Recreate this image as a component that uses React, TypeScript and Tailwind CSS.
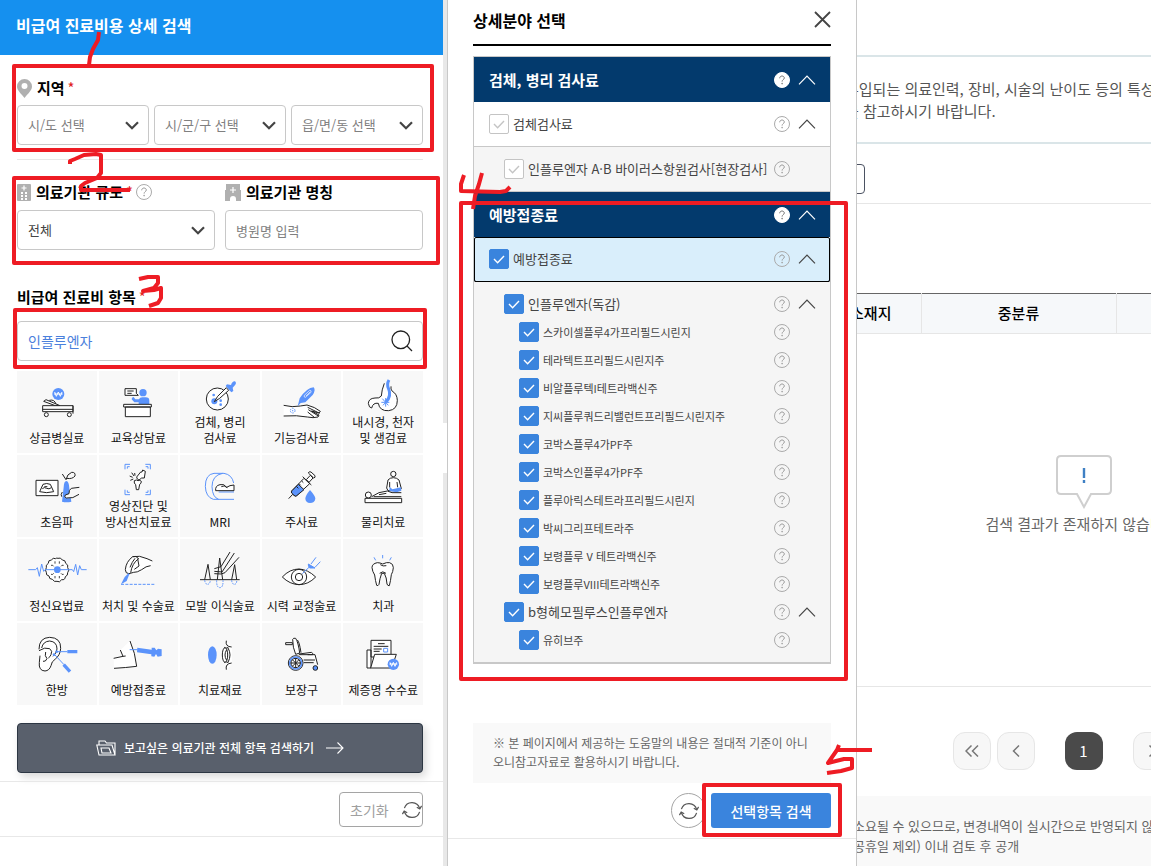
import React, { useState } from "react";

const BLUE = "#5b93fb";
const INK = "#222222";

function Help({ solid = false }: { solid?: boolean }) {
  return (
    <svg viewBox="0 0 16 16" className="size-4 shrink-0" fill="none">
      <circle cx="8" cy="8" r="7.5" fill={solid ? "#fff" : "none"} stroke={solid ? "#fff" : "#aaaaaa"} />
      <path d="M5.700 6.300c0-1.400 1-2.300 2.300-2.300s2.300.8 2.300 2c0 1.600-2.200 1.700-2.200 3.600" stroke={solid ? "#777" : "#999"} strokeWidth="1" />
      <circle cx="8.100" cy="11.600" r=".8" fill={solid ? "#777" : "#999"} />
    </svg>
  );
}

function ChevronUp({ color = "#444" }: { color?: string }) {
  return (
    <svg viewBox="0 0 18 10" className="h-[10px] w-[18px] shrink-0" fill="none">
      <path d="M1 9.300 9 1.200l8 8.100" stroke={color} strokeWidth="1.200" />
    </svg>
  );
}

function Refresh() {
  return (
    <svg viewBox="0 0 20 20" className="size-5 shrink-0" fill="none" stroke="#555" strokeWidth="1.200">
      <path d="M2.400 8.200A7.900 7.900 0 0 1 17.600 8.500M17.600 11.800A7.900 7.900 0 0 1 2.400 11.500" />
      <path d="M14.800 7.200l3 1.700 1.800-3M5.200 12.800l-3-1.700-1.800 3" />
    </svg>
  );
}

function Drop({ label, first, tone }: { label: string; first: string; tone: string }) {
  return (
    <div className="grid min-w-0 flex-1 items-center">
      <select
        aria-label={label}
        className={`col-start-1 row-start-1 h-10 w-full appearance-none rounded border border-[#c8c8c8] bg-white pl-[10px] pr-8 text-[13px] ${tone}`}
      >
        <option>{first}</option>
      </select>
      <svg viewBox="0 0 14 9" className="pointer-events-none col-start-1 row-start-1 mr-[10px] h-[9px] w-[14px] justify-self-end" fill="none">
        <path d="M1 1.200l6 6 6-6" stroke="#444" strokeWidth="2.200" />
      </svg>
    </div>
  );
}

type Tile = { label: string[]; box: string; art: React.ReactNode };

const tiles: Tile[] = [
  {
    label: ["상급병실료"],
    box: "80 45 180 108",
    art: (
      <>
        <circle cx="174" cy="72" r="18" fill={BLUE} stroke="none" />
        <path d="M163 66l5 13 6-13 6 13 5-13M161 72h26" stroke="#fff" />
        <path d="M147 91q16-4 20 12" />
        <path d="M130 94l7-5 42 18h-14z" fill="#fff" />
        <path d="M127 107h91v18h-91zM127 118h91M218 107v24" fill="#fff" />
        <circle cx="138" cy="134" r="6" fill="#fff" />
        <circle cx="207" cy="134" r="6" fill="#fff" />
      </>
    ),
  },
  {
    label: ["교육상담료"],
    box: "325 45 180 108",
    art: (
      <>
        <path d="M376 56h34v14l6 6h-40zM383 63h19M383 70h13" fill="#fff" />
        <circle cx="430" cy="68" r="11" fill={BLUE} stroke="none" />
        <path d="M449 103V92q0-10-11-10h-10q-8 0-10 6l-11 0-5-7q-7 1-6 7l8 9h13v6z" fill={BLUE} stroke="none" />
        <path d="M372 103h83v8h-83zM377 111h75v29h-75z" fill="#fff" />
      </>
    ),
  },
  {
    label: ["검체, 병리", "검사료"],
    box: "570 24 180 108",
    art: (
      <>
        <circle cx="652" cy="87" r="33" fill="#fff" />
        <g fill={BLUE} stroke="none">
          <circle cx="643" cy="94" r="9" />
          <circle cx="641" cy="75" r="4" />
          <circle cx="662" cy="92" r="4" />
          <circle cx="662" cy="104" r="4" />
        </g>
        <path d="M643 95l10-16 26-26 7 8-27 24z" fill="#fff" />
        <path d="M681 43l12 2q4-12 12-11 7 6-3 15l-4 4 2 10-6 4-17-19z" fill={BLUE} stroke="none" />
      </>
    ),
  },
  {
    label: ["기능검사료"],
    box: "155 45 180 108",
    art: (
      <>
        <path d="M190 106q26 7 50 2l20-3q24 6 40 19l-4 5-22-6 22 12-3 6q-14 4-32 0-30-6-71-3" fill="#fff" />
        <path d="M262 112l36 18M264 119l30 19M262 126l20 16" />
        <path d="M232 109l6-24q22-32 42-33 7 8-3 23l-22 22-14 2z" fill={BLUE} stroke="none" />
        <path d="M252 76l16-15q6 0 4 6l-17 15q-5 0-3-6zM257 78l12-12" stroke="#fff" strokeWidth="2" />
        <circle cx="217" cy="122" r="7" stroke={BLUE} strokeDasharray="4 3" />
        <circle cx="217" cy="122" r="2" fill={BLUE} stroke="none" />
      </>
    ),
  },
  {
    label: ["내시경, 천자", "및 생검료"],
    box: "400 24 180 108",
    art: (
      <>
        <path
          d="M494 40q-8 20-9 38-6 8-19 6-19 1-20 16 2 14 10 14 4-17 20-14 4 24 31 22 26-3 26-31-1-20-15-27-6-6-4-15z"
          fill="#fff"
          stroke="none"
        />
        <path d="M494 40q-8 20-9 38-6 8-19 6-19 1-20 16 2 14 10 14 4-17 20-14 4 24 31 22 26-3 26-31-1-20-15-27-6-6-4-15" />
        <path d="M508 30q-8 13-1 27 9 21-8 39" stroke={BLUE} strokeWidth="9" />
        <path d="M488 86l18 20M506 88l-16 18M485 97h24M498 84v26" stroke={BLUE} />
      </>
    ),
  },
  {
    label: ["초음파"],
    box: "80 297 180 108",
    art: (
      <>
        <path d="M107 331h66v46h-66z" fill="#fff" />
        <path d="M128 343q11-5 22 0l10 22q-21 6-42 0zM126 356q6-6 13-1 7 4 14-2M132 350h9" />
        <path d="M190 352q1-19 8-19 8 1 9 22l6 40q-14 3-28 0z" fill={BLUE} stroke="none" />
        <path d="M186 312l11 17M197 329q3-17 17-22 12-1 10 11-8 10-25 7" />
        <path d="M237 352l-24 3q-8 5-7 16l-11 4q-5 6 3 9 20 3 38-11" fill="#f8f8f8" />
        <path d="M186 366q-6 8-2 14" />
      </>
    ),
  },
  {
    label: ["영상진단 및", "방사선치료료"],
    box: "325 276 180 108",
    art: (
      <>
        <path d="M376 298v-15h15M437 283h15v15M452 359v15h-15M391 374h-15v-15M383 296v-6h7M438 290h7v6M445 361v6h-7M390 367h-7v-6" stroke={BLUE} />
        <path d="M411 321l12-15 4 0 2-6 8 4-3 20-8 0-8 6q-7-2-7-9zM404 332q7-4 11 0 6-3 10 2 0 7-5 9l-3 16h-7l-2-15q-6-4-4-12z" fill="#fff" />
        <path d="M390 318l9 4M396 308l7 10M392 331l9-4M405 309l1 8" />
      </>
    ),
  },
  {
    label: ["MRI"],
    box: "570 297 180 108",
    art: (
      <>
        <path d="M642 310q-26 3-26 39 1 32 24 39h62M642 310h30q24 4 29 29M668 310q-32 6-32 40 1 32 20 38M656 366h46" stroke={BLUE} />
        <path d="M702 345l-12 2-10 5q-8-12-20-8-15 3-13 18h55z" fill="#fff" />
        <path d="M664 350q8-6 18 3" />
      </>
    ),
  },
  {
    label: ["주사료"],
    box: "155 297 180 108",
    art: (
      <>
        <path d="M205 386l12-13" />
        <path d="M215 362l36-37 17 16-39 36q-4 3-8-1l-7-7q-2-3 1-7z" fill="#fff" />
        <path d="M215 362l19-19 17 16-22 18q-4 3-8-1l-7-7q-2-3 1-7z" fill={BLUE} />
        <path d="M247 320l26 25M258 329l12-13 8 8-12 13zM264 309q2-6 8-3l12 11q2 6-4 7zM228 349l6 6M236 341l5 5M244 333l5 5" fill="#fff" />
        <path d="M269 360q16 18 16 26-2 13-16 13-13-1-14-13 0-9 14-26z" fill={BLUE} stroke="none" />
      </>
    ),
  },
  {
    label: ["물리치료"],
    box: "400 297 180 108",
    art: (
      <>
        <circle cx="521" cy="312" r="8" fill="#fff" />
        <path d="M501 354l4-24q6-7 16-7t17 7l7 26-10 6h-30z" fill="#fff" />
        <path d="M510 350l8 8 26-6 1 10-14 5-22-4z" fill={BLUE} stroke="none" />
        <path d="M510 336v16M532 336l2 16" />
        <circle cx="446" cy="375" r="9" fill="#fff" />
        <path d="M456 380l22-12 25-5 14 5h28M462 380h83M478 374l22-4M436 385h110v13h-110z" fill="#fff" />
      </>
    ),
  },
  {
    label: ["정신요법료"],
    box: "80 45 180 108",
    art: (
      <>
        <path d="M166 62q-8-4-13 4-10 0-9 10-9 5-6 13-5 8 0 14-2 9 8 11 0 10 10 10 6 9 14 6 8 5 14-5 10 2 11-9 8-3 7-12 7-8 0-15 3-9-6-13 0-10-10-10-5-9-13-5-4-2-7 1z" fill="#fff" />
        <path d="M164 70v7M177 70v7M152 82q6-2 8 3M190 82q-6-2-8 3M152 109q6 2 8-3M190 109q-6 2-8-3M164 114v7M177 114v7" strokeWidth="2.500" />
        <path d="M84 95h22l5-6 6 26 7-37 6 22 4-5h82l4 6 6-22 6 32 6-28 5 12h16" stroke={BLUE} />
        <circle cx="171" cy="95" r="10" fill={BLUE} stroke="none" />
      </>
    ),
  },
  {
    label: ["처치 및 수술료"],
    box: "325 45 180 108",
    art: (
      <>
        <path d="M404 56q20-3 38 6l16 7-6 25q-14 1-26 6-14 8-24 6l-14-3q-10 3-11-7 2-24 26-40 9-3 14 6" fill="#fff" stroke="none" />
        <path d="M399 56q20-5 43 6l16 7M453 83q-14 1-27 12-14 9-24 8l-14 4q-11 0-11-12 2-24 22-39 10-4 18 6-20 14-24 42" />
        <path d="M414 62l4 22-14 10M391 88q6-16 15-27" />
        <path d="M387 105l-12 12-11 22 17-10 8-20z" fill={BLUE} stroke="none" />
        <path d="M364 139h104" stroke={BLUE} strokeDasharray="9 4" />
      </>
    ),
  },
  {
    label: ["모발 이식술료"],
    box: "570 45 180 108",
    art: (
      <>
        <path d="M600 125h119" />
        <path d="M614 125l10-46 7 46M652 125l7-65 9 65M695 125l9-45 6 45" />
        <path d="M643 92l20-6 27-44M643 100l23 2 37-57M643 107l20 1 12-4 42-46" fill="none" />
        <path d="M614 127q2 12 9 12 7-1 8-12M650 127q-1 22 10 22 10-1 9-22M695 127q1 12 9 12 7-2 6-12" stroke={BLUE} strokeDasharray="5 3" />
      </>
    ),
  },
  {
    label: ["시력 교정술료"],
    box: "155 45 180 108",
    art: (
      <>
        <path d="M186 117q22-24 50-24 26 1 50 24-22 23-50 23-28-1-50-23z" fill="#fff" />
        <circle cx="236" cy="117" r="23" />
        <circle cx="236" cy="117" r="11" />
        <path d="M246 107l20-19M272 78l15-20M284 88l16-17" stroke={BLUE} />
        <path d="M264 78l20 12-16 0q-5-4-4-12z" fill={BLUE} stroke={BLUE} />
      </>
    ),
  },
  {
    label: ["치과"],
    box: "400 45 180 108",
    art: (
      <>
        <path d="M473 74q8 0 16 4 12-6 21-4 11 3 11 15-1 13-6 21-2 18-6 33-5 1-7-5-1-20-8-32h-8q-6 16-8 33-3 6-7 3-4-14-6-31-7-11-8-22 0-12 16-15z" fill="#fff" />
        <path d="M482 80q8 6 18 3M480 106q9-9 19 0" />
        <path d="M463 58l5 9M489 51v10M515 58l-5 9" stroke={BLUE} />
      </>
    ),
  },
  {
    label: ["한방"],
    box: "80 297 180 108",
    art: (
      <>
        <path d="M116 334q0-35 32-36 34 1 33 33-1 20-16 32-12 8-13 20-5 15-18 16-20-1-17-26l2-20" fill="#fff" />
        <path d="M124 330q4-20 24-21 22 2 22 24-2 14-12 22M116 338q18-12 32-6 10 7 4 18-2 6-8 10M136 342q-4 12 4 20-4 10-12 8" />
        <path d="M169 341h32M163 350l28 30" stroke={BLUE} />
        <path d="M201 341h30M190 380l19 21" stroke={BLUE} strokeWidth="10" />
        <circle cx="169" cy="341" r="4" fill={BLUE} stroke="none" />
        <circle cx="161" cy="350" r="4" fill={BLUE} stroke="none" />
      </>
    ),
  },
  {
    label: ["예방접종료"],
    box: "325 297 180 108",
    art: (
      <>
        <path d="M391 309q14 31 20 76-32 4-68 6l-1-30 28-6-8-19z" fill="#fff" stroke="none" />
        <path d="M391 309q16 36 20 76-32 4-68 6M362 336l8 19-28 6M370 355l8-1" />
        <path d="M390 335h24M460 343h18" stroke={BLUE} />
        <path d="M413 329l43 6 0-6 9 0 5 8 5-5 11 2v20l-12 2-5-8-5 8-9-1v-6l-43-6z" fill={BLUE} stroke="none" />
      </>
    ),
  },
  {
    label: ["치료재료"],
    box: "570 297 180 108",
    art: (
      <>
        <ellipse cx="637" cy="351" rx="13" ry="26" fill={BLUE} stroke="none" />
        <path d="M679 308q-3 14 7 19 10 24 0 46-10 8-6 22l16-18V326z" fill="#fff" stroke="none" />
        <path d="M679 308q-4 18 16 19M679 395q-4-18 16-20M685 328q-9 6-12 0M685 374q-9-6-12 0" />
        <ellipse cx="675" cy="351" rx="8" ry="22" fill="#fff" />
        <path d="M684 330q12 20 0 43M680 335q-10 16 0 32" />
      </>
    ),
  },
  {
    label: ["보장구"],
    box: "155 297 180 108",
    art: (
      <>
        <path d="M196 314h20v6h-20zM217 304q2-5 9-3 8 12 12 44l-12 4q-9-20-9-45zM231 306q6 4 11 38M236 348l38-5q4 2 3 7h-40zM262 350h22l8 30M250 366h34M250 374h30" fill="#fff" />
        <circle cx="226" cy="375" r="22" fill="#fff" stroke={INK} strokeWidth="3" />
        <circle cx="226" cy="375" r="18" stroke={BLUE} strokeWidth="5" />
        <path d="M226 360v30M211 375h30M216 365l20 20M236 365l-20 20" />
        <circle cx="226" cy="375" r="14" />
        <circle cx="285" cy="390" r="7" fill={BLUE} />
      </>
    ),
  },
  {
    label: ["제증명 수수료"],
    box: "400 297 180 108",
    art: (
      <>
        <path d="M442 390v-54h12v54zM454 307h60v50h-60z" fill="#fff" />
        <path d="M475 317h20M462 325h44M462 333h24M462 340h18" />
        <path d="M492 331h12v11h-12z" stroke={BLUE} />
        <path d="M465 349h65l-14 41h-63z" fill="#fff" />
        <circle cx="521" cy="379" r="17" fill={BLUE} stroke="none" />
        <path d="M511 373l5 12 5-12 5 12 5-12M509 378h24" stroke="#fff" />
      </>
    ),
  },
];

function Box({ on, id, onToggle }: { on: boolean; id: string; onToggle: () => void }) {
  return (
    <span className="grid size-5 shrink-0 place-items-center">
      <input
        id={id}
        type="checkbox"
        checked={on}
        onChange={onToggle}
        className="col-start-1 row-start-1 size-5 appearance-none rounded-[2px] border border-[#c4c4c4] bg-white checked:border-[#3a84dd] checked:bg-[#3a84dd]"
      />
      <svg viewBox="0 0 12 9" className="pointer-events-none col-start-1 row-start-1 h-[9px] w-3" fill="none">
        <path d="M1 4l3.600 3.800L11 1" stroke={on ? "#fff" : "#c4c4c4"} strokeWidth="1.400" />
      </svg>
    </span>
  );
}

function Row({ id, text, initial = true, arrow = false, className }: { id: string; text: string; initial?: boolean; arrow?: boolean; className: string }) {
  const [on, setOn] = useState(initial);
  return (
    <div className={`flex items-center pr-[14px] ${className}`}>
      <Box id={id} on={on} onToggle={() => setOn(!on)} />
      <label htmlFor={id} className="ml-1 flex-1 whitespace-nowrap">
        {text}
      </label>
      <button type="button" aria-label="도움말" className="mr-2">
        <Help />
      </button>
      <button type="button" aria-label="접기" className={arrow ? "w-[18px]" : "invisible w-[18px]"}>
        <ChevronUp />
      </button>
    </div>
  );
}

function GroupHead({ text }: { text: string }) {
  return (
    <div className="flex h-[45px] items-center bg-[#033a6d] pl-[15px] pr-[14px] text-[15px] font-bold text-white">
      <h3 className="flex-1 pt-[2px]">{text}</h3>
      <button type="button" aria-label="도움말" className="mr-2">
        <Help solid />
      </button>
      <button type="button" aria-label="접기">
        <ChevronUp color="#fff" />
      </button>
    </div>
  );
}

const vaccines = [
  "스카이셀플루4가프리필드시린지",
  "테라텍트프리필드시린지주",
  "비알플루텍I테트라백신주",
  "지씨플루쿼드리밸런트프리필드시린지주",
  "코박스플루4가PF주",
  "코박스인플루4가PF주",
  "플루아릭스테트라프리필드시린지",
  "박씨그리프테트라주",
  "보령플루 V 테트라백신주",
  "보령플루VIII테트라백신주",
];

const Star = () => <span className="ml-[3px] font-normal text-[#e02020]">*</span>;

function SearchPanel() {
  return (
    <section className="w-[443px] shrink-0 bg-white">
      <header className="flex h-[55px] items-center bg-[#1590ef] px-4 pb-[6px]">
        <h1 className="text-base font-bold text-white">비급여 진료비용 상세 검색</h1>
      </header>
      <form className="px-[17px] pr-5" onSubmit={(e) => e.preventDefault()}>
        <div className="border-b border-[#e8e8e8] pb-[14px] pt-[22px]">
          <h2 className="flex h-[22px] items-center text-[15px] font-bold">
            <svg viewBox="0 0 15 19" className="mr-[5px] h-[19px] w-[15px]">
              <path fillRule="evenodd" fill="#b0b0b0" d="M7.500 0A7.500 7.500 0 0 1 15 7.500c0 4-4.500 7.500-7.500 11.500C4.500 15 0 11.500 0 7.500A7.500 7.500 0 0 1 7.500 0zm0 4a3 3 0 1 0 0 6 3 3 0 0 0 0-6z" />
            </svg>
            지역
            <Star />
          </h2>
          <div className="mt-[6px] flex gap-[5px]">
            <Drop label="시/도" first="시/도 선택" tone="text-[#808080]" />
            <Drop label="시/군/구" first="시/군/구 선택" tone="text-[#808080]" />
            <Drop label="읍/면/동" first="읍/면/동 선택" tone="text-[#808080]" />
          </div>
        </div>
        <div className="mt-[21px] flex gap-[10px]">
          <div className="flex-1">
            <h2 className="flex h-[22px] items-center text-[15px] font-bold">
              <svg viewBox="0 0 14 17" className="mr-[5px] h-[17px] w-[14px]">
                <rect width="14" height="17" rx="1" fill="#b0b0b0" />
                <path stroke="#fff" strokeWidth="1.200" d="M7 1.500v5M4.500 4h5" />
                <path fill="#fff" d="M4 8h2v2H4zM8 8h2v2H8zM4 11h2v2H4zM8 11h2v2H8zM4 14h2v2H4zM8 14h2v2H8z" />
              </svg>
              의료기관 규모
              <Star />
              <button type="button" aria-label="도움말" className="ml-[3px]">
                <Help />
              </button>
            </h2>
            <div className="mt-[7px] flex">
              <Drop label="의료기관 규모" first="전체" tone="text-[#444]" />
            </div>
          </div>
          <div className="flex-1">
            <label htmlFor="clinic" className="flex h-[22px] items-center text-[15px] font-bold">
              <svg viewBox="0 0 16 17" className="mr-[5px] h-[17px] w-4">
                <path fill="#b0b0b0" d="M1 0h14v6h1v11h-5v-2a3 3 0 0 0-6 0v2H0V6h1z" />
                <path stroke="#fff" strokeWidth="1.200" d="M8 3v6M5 6h6" />
              </svg>
              의료기관 명칭
            </label>
            <input
              id="clinic"
              placeholder="병원명 입력"
              className="mt-[7px] h-10 w-full rounded border border-[#c8c8c8] px-[10px] text-[13px] placeholder:text-[#808080]"
            />
          </div>
        </div>
        <label htmlFor="item" className="mt-9 flex h-[22px] items-center text-[15px] font-bold">
          비급여 진료비 항목
          <Star />
        </label>
        <div className="mt-[13px] flex h-10 items-center rounded border border-[#c8c8c8] pl-[10px] pr-[9px]">
          <input id="item" defaultValue="인플루엔자" className="min-w-0 flex-1 text-sm text-[#4a80dc] outline-none" />
          <button type="button" aria-label="검색">
            <svg viewBox="0 0 22 22" className="size-[22px]" fill="none" stroke="#222" strokeWidth="1.300">
              <circle cx="9.800" cy="9.800" r="8.800" />
              <path d="M16 16l5 5" />
            </svg>
          </button>
        </div>
        <div className="mt-[10px] grid grid-cols-5 gap-[2px]">
          {tiles.map((t) => (
            <button
              type="button"
              key={t.label[0]}
              className="flex h-[82px] flex-col items-center justify-end bg-[#f8f8f8] pb-[7px] text-xs leading-4 text-[#111]"
            >
              <svg
                viewBox={t.box}
                className={t.label.length > 1 ? "h-9 w-15 overflow-visible" : "mb-[9px] h-9 w-15 overflow-visible"}
                fill="none"
                stroke={INK}
                strokeWidth="3"
                strokeLinejoin="round"
              >
                {t.art}
              </svg>
              {t.label.map((line) => (
                <span key={line} className="whitespace-nowrap">
                  {line}
                </span>
              ))}
            </button>
          ))}
        </div>
        <button
          type="button"
          className="mt-[18px] flex h-[50px] w-full items-center justify-center rounded border border-[#2c3643] bg-[#59606c] text-xs font-medium text-white shadow-[3px_4px_8px_rgba(0,0,0,0.15)]"
        >
          <svg viewBox="0 0 20 16" className="mr-2 h-4 w-5" fill="none" stroke="#fff" strokeWidth="1.100">
            <path d="M3 5V1h6l1.500 2H19v12M3 15 .8 5H16l3 10zM5 8h8l2 5H6z" />
          </svg>
          보고싶은 의료기관 전체 항목 검색하기
          <svg viewBox="0 0 18 12" className="ml-3 h-3 w-[18px]" fill="none" stroke="#fff" strokeWidth="1.100">
            <path d="M0 6h17M11.500.5 17 6l-5.500 5.500" />
          </svg>
        </button>
      </form>
      <div className="mt-2 flex justify-end border-y border-[#e8e8e8] pb-[9px] pr-5 pt-[10px]">
        <button type="reset" className="flex h-[35px] w-[84px] items-center justify-between rounded border border-[#a5a5a5] pl-[10px] text-sm text-[#a0a0a0]">
          초기화
          <Refresh />
        </button>
      </div>
    </section>
  );
}

function DetailPanel() {
  return (
    <section className="w-[410px] shrink-0 border-x border-[#c8c8c8] bg-white">
      <div className="px-[25px]">
        <header className="flex h-[46px] items-center justify-between border-b-2 border-black pb-[5px]">
          <h2 className="text-base font-bold">상세분야 선택</h2>
          <button type="button" aria-label="닫기">
            <svg viewBox="0 0 17 17" className="size-[17px]" fill="none" stroke="#444" strokeWidth="1.800">
              <path d="M1 1l15 15M16 1L1 16" />
            </svg>
          </button>
        </header>
        <div className="mt-[10px] border border-b-2 border-[#c8c8c8] text-[13px] text-[#444]">
          <GroupHead text="검체, 병리 검사료" />
          <Row id="lab" text="검체검사료" initial={false} arrow className="h-[45px] border-b border-[#c8c8c8] pl-[15px]" />
          <Row
            id="lab-flu"
            text="인플루엔자 A·B 바이러스항원검사[현장검사]"
            initial={false}
            className="h-[45px] border-b border-[#c8c8c8] bg-[#f5f5f5] pl-[30px]"
          />
          <GroupHead text="예방접종료" />
          <Row
            id="vac"
            text="예방접종료"
            arrow
            className="h-[45px] rounded-[2px] border-b border-black bg-[#d9eefb] pl-[15px] outline-1 -outline-offset-1 outline-black"
          />
          <div className="bg-[#f5f5f5] pb-2 pt-2">
            <Row id="flu" text="인플루엔자(독감)" arrow className="h-7 pl-[30px]" />
            {vaccines.map((v, i) => (
              <Row key={v} id={`flu-${i}`} text={v} className="h-7 pl-[45px] text-[11px]" />
            ))}
            <Row id="hib" text="b형헤모필루스인플루엔자" arrow className="h-7 pl-[30px]" />
            <Row id="hib-1" text="유히브주" className="h-7 pl-[45px] text-[11px]" />
          </div>
        </div>
        <p className="mt-[59px] bg-[#f9f9f9] pb-3 pl-5 pt-[10px] text-xs leading-[19px] text-[#666]">
          ※ 본 페이지에서 제공하는 도움말의 내용은 절대적 기준이 아니
          <br />
          오니참고자료로 활용하시기 바랍니다.
        </p>
      </div>
      <div className="flex justify-end gap-[5px] border-b border-[#e8e8e8] px-[25px] py-[10px]">
        <button type="button" aria-label="초기화" className="flex size-[35px] items-center justify-center rounded-full border border-[#a5a5a5]">
          <Refresh />
        </button>
        <button type="button" className="h-[35px] w-[120px] rounded-[3px] bg-[#3a84dd] text-sm font-medium text-white">
          선택항목 검색
        </button>
      </div>
    </section>
  );
}

function PageButton({ label, d }: { label: string; d: string }) {
  return (
    <button type="button" aria-label={label} className="flex size-[38px] items-center justify-center rounded-xl border border-[#e6e6e6] bg-[#f7f7f7]">
      <svg viewBox="0 0 14 12" className="h-3 w-[14px]" fill="none" stroke="#777" strokeWidth="1.500">
        <path d={d} />
      </svg>
    </button>
  );
}

function ResultPane() {
  return (
    <main className="flex min-w-0 flex-1 overflow-hidden">
      <div className="-ml-9 flex w-[525px] shrink-0 flex-col">
        <div className="mt-[55px] border-y-2 border-[#dae5e8] pb-5 pl-6 pt-[21px] text-[15px] leading-[22px] whitespace-nowrap text-[#555]">
          <p>투입되는 의료인력, 장비, 시술의 난이도 등의 특성을</p>
          <p>를 참고하시기 바랍니다.</p>
        </div>
        <div className="flex border-b border-[#e6e6e6] pb-[9px] pt-5">
          <button type="button" aria-label="안내" className="h-[30px] w-11 rounded border border-[#4b5262]" />
        </div>
        <table className="mt-[89px] w-full table-fixed border-y border-t-[#666] border-b-[#e6e6e6] text-[15px]">
          <thead>
            <tr className="h-10 border-b border-[#e6e6e6] bg-[#f6f8fa]">
              <th className="w-[100px] border-r border-[#e6e6e6] font-medium">소재지</th>
              <th className="w-[195px] border-r border-[#e6e6e6] font-medium">중분류</th>
              <th />
            </tr>
          </thead>
          <tbody>
            <tr>
              <td colSpan={3} className="h-[353px] pb-[30px] pt-0 text-center text-[#666]">
                <svg viewBox="0 0 56 54" className="mx-auto h-[54px] w-14" fill="none">
                  <path d="M5 1h46q4 0 4 4v30q0 4-4 4H35l-7 13-7-13H5q-4 0-4-4V5q0-4 4-4z" stroke="#cfcfcf" strokeWidth="2" fill="#fff" />
                  <path d="M28 13v10M28 25v3" stroke="#3f80c4" strokeWidth="2.400" />
                </svg>
                <p className="mt-1 leading-[22px]">검색 결과가 존재하지 않습니다.</p>
              </td>
            </tr>
          </tbody>
        </table>
        <nav aria-label="페이지" className="mt-[45px] flex justify-center gap-[6px]">
          <PageButton label="처음" d="M6.500.5 1 6l5.500 5.500M13 .5 7.500 6l5.500 5.500" />
          <PageButton label="이전" d="M10 .5 4.500 6l5.500 5.500" />
          <button type="button" className="mx-6 size-[38px] rounded-xl bg-[#4a4a4a] text-[15px] text-white">
            1
          </button>
          <PageButton label="다음" d="M4.500.5 10 6l-5.500 5.500" />
          <PageButton label="마지막" d="M1 .5 6.500 6 1 11.500M7.500.5 13 6l-5.500 5.500" />
        </nav>
        <div className="mt-[26px] flex-1 bg-[#f9f9f9] pl-8 pt-5 text-[13px] leading-5 whitespace-nowrap text-[#666]">
          <p>소요될 수 있으므로, 변경내역이 실시간으로 반영되지 않을</p>
          <p>공휴일 제외) 이내 검토 후 공개</p>
        </div>
      </div>
    </main>
  );
}

function Marks() {
  return (
    <svg viewBox="0 0 880 866" className="pointer-events-none absolute left-0 top-0 h-[866px] w-[880px]" fill="none" stroke="#ee1c24" strokeWidth="4" strokeLinejoin="round">
      <rect x="14" y="66" width="418" height="84" />
      <rect x="14" y="178" width="424" height="85" />
      <rect x="15" y="310" width="410" height="57" />
      <rect x="461" y="203" width="385" height="476" />
      <rect x="704" y="785" width="136" height="50" />
      <path d="M99 32l-1 8-5 9-3 8-1 8" />
      <path d="M70 164v-3l5-2 9-4 12-1 5 1v18l-4 5-12 5-4 3v4h49" />
      <path d="M139 279l9-2h10v6l-4 5-11 3 11-1 7-2v10l-3 5-9 3" />
      <path d="M464 175l-3 9v7l39 1 6-1 4-4M482 173l-3 11-4 12-2 13" />
      <path d="M839 745l-2 5-9 13 16-4h8v9l-11 3-14 2M837 750h35" />
    </svg>
  );
}

export default function App() {
  return (
    <div lang="ko" className="relative flex min-h-screen overflow-hidden bg-white font-['Noto_Sans_CJK_KR',sans-serif] text-black">
      <SearchPanel />
      <div className="w-1 shrink-0 bg-[#e8e8e8]">
        <div className="mt-[423px] h-[50px] bg-white" />
      </div>
      <DetailPanel />
      <ResultPane />
      <Marks />
    </div>
  );
}
